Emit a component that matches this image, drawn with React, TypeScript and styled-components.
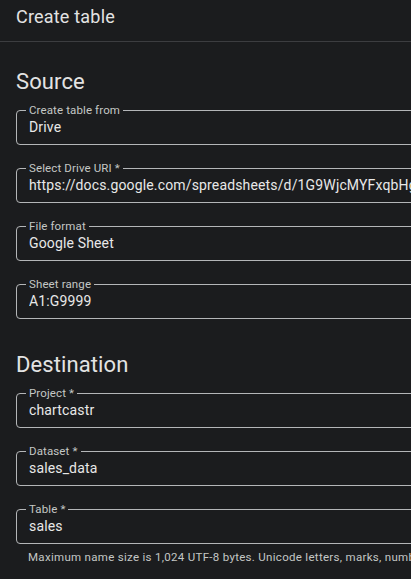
import React from 'react'
import styled, { createGlobalStyle } from 'styled-components'

const GlobalStyle = createGlobalStyle`
  html, body {
    margin: 0;
    padding: 0;
    background: #1b1c1e;
    overflow: hidden;
  }
  body {
    font-family: Roboto, "Noto Sans", "Liberation Sans", sans-serif;
    color: #e3e3e3;
    -webkit-font-smoothing: antialiased;
  }
`

const Page = styled.div`
  width: 640px;
  min-height: 579px;
  background: #1b1c1e;
`

const Header = styled.div`
  box-sizing: border-box;
  height: 42px;
  padding: 5px 16px 0;
  border-bottom: 1px solid #3c3d40;
  font-size: 18px;
  line-height: 24px;
  letter-spacing: 0.2px;
  color: #e3e3e3;
`

const Section = styled.section<{ $top: number }>`
  display: flex;
  flex-direction: column;
  gap: 17px;
  padding: 0 0 0 16px;
  margin-top: ${({ $top }) => $top}px;
`

const SectionTitle = styled.h2`
  margin: 0 0 -9px;
  font-size: 22px;
  line-height: 28px;
  font-weight: 400;
  letter-spacing: 0.1px;
  color: #e3e3e3;
`

const Outline = styled.fieldset`
  margin: 0;
  padding: 1px 12px 7px;
  border: 1px solid #b4b6b8;
  border-radius: 4px;
  min-width: 0;
`

const Label = styled.legend`
  margin-left: -3px;
  padding: 0 3px;
  font-size: 11.5px;
  line-height: 12px;
  letter-spacing: 0.12px;
  color: #c4c7c5;
`

const Value = styled.div`
  font-size: 14px;
  line-height: 20px;
  letter-spacing: 0.15px;
  color: #e8e8e8;
  white-space: nowrap;
  overflow: hidden;
`

const Hint = styled.div`
  margin: -12px 0 0 12px;
  font-size: 11.5px;
  line-height: 16px;
  letter-spacing: 0.3px;
  color: #c4c7c5;
  white-space: nowrap;
`

type FieldProps = { label: string; value: string }

const Field = ({ label, value }: FieldProps) => (
  <Outline>
    <Label>{label}</Label>
    <Value>{value}</Value>
  </Outline>
)

const source: FieldProps[] = [
  { label: 'Create table from', value: 'Drive' },
  {
    label: 'Select Drive URI *',
    value: 'https://docs.google.com/spreadsheets/d/1G9WjcMYFxqbHgKq3mTq8sZ/edit',
  },
  { label: 'File format', value: 'Google Sheet' },
  { label: 'Sheet range', value: 'A1:G9999' },
]

const destination: FieldProps[] = [
  { label: 'Project *', value: 'chartcastr' },
  { label: 'Dataset *', value: 'sales_data' },
  { label: 'Table *', value: 'sales' },
]

export default function App() {
  return (
    <>
      <GlobalStyle />
      <Page>
        <Header>Create table</Header>

        <Section $top={26}>
          <SectionTitle>Source</SectionTitle>
          {source.map((f) => (
            <Field key={f.label} {...f} />
          ))}
        </Section>

        <Section $top={32}>
          <SectionTitle>Destination</SectionTitle>
          {destination.map((f) => (
            <Field key={f.label} {...f} />
          ))}
          <Hint>
            Maximum name size is 1,024 UTF-8 bytes. Unicode letters, marks, numbers,
            connectors, dashes and spaces are allowed.
          </Hint>
        </Section>
      </Page>
    </>
  )
}
